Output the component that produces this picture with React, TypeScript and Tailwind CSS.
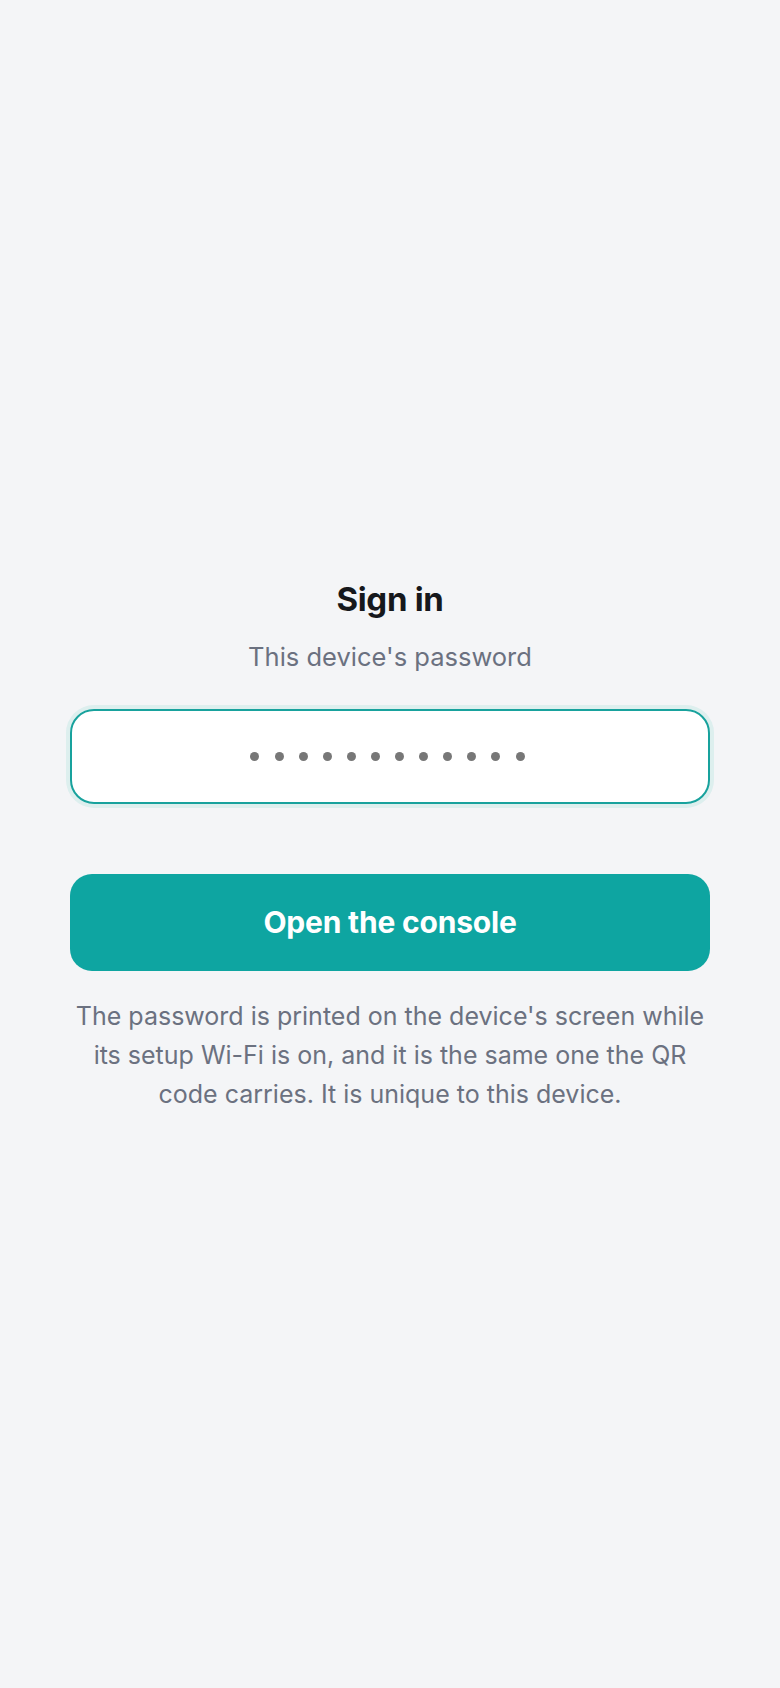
import React from "react";

const App = () => {
  const dots = Array.from({ length: 12 });

  return (
    <div
      className="min-h-screen w-full bg-[#f4f5f7] flex items-center justify-center px-[70px] pt-[5px]"
      style={{ fontFamily: "Inter, 'Noto Sans', sans-serif" }}
    >
      <div className="w-full flex flex-col items-center">
        {/* Header */}
        <h1 className="text-[33px] leading-[40px] font-bold text-[#16181c] tracking-[-0.3px]">
          Sign in
        </h1>
        <p className="mt-[20px] text-[25.5px] leading-[36px] text-[#6b7180]">
          This device's password
        </p>

        {/* Password field */}
        <div className="mt-[34px] w-full h-[95px] rounded-[24px] bg-white border-2 border-[#18a29d] shadow-[0_0_0_4px_rgba(20,184,166,0.1)] flex items-center justify-center pr-[5px]">
          <div className="flex items-center gap-[15.1px]">
            {dots.map((_, i) => (
              <span key={i} className="block w-[9px] h-[9px] rounded-full bg-[#777777]" />
            ))}
          </div>
        </div>

        {/* Submit */}
        <button className="mt-[70px] w-full h-[97px] rounded-[22px] bg-[#0ea5a1] text-white text-[30px] font-bold tracking-[-0.2px]">
          Open the console
        </button>

        {/* Help text */}
        <p className="mt-[26px] text-center text-[25px] leading-[38.7px] text-[#6b7180]">
          The password is printed on the device's screen while its setup Wi-Fi is on, and it is the same one the QR
          code carries. It is unique to this device.
        </p>
      </div>
    </div>
  );
};

export default App;
